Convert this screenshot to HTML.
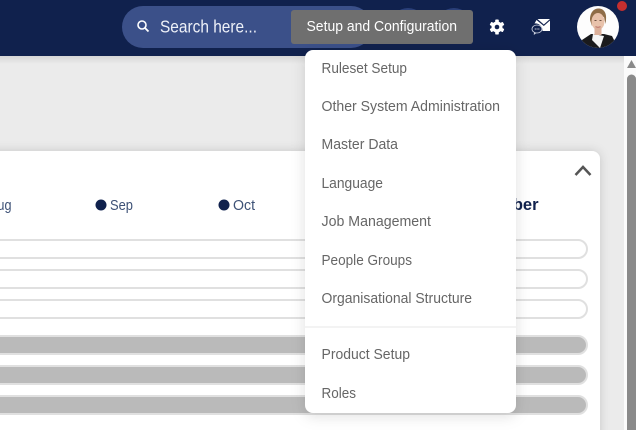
<!DOCTYPE html>
<html><head><meta charset="utf-8"><style>
html,body{margin:0;padding:0;width:636px;height:430px;overflow:hidden;background:#ebebeb}
svg{display:block}
text{font-family:"Liberation Sans",sans-serif}
.m{font-size:14.6px;fill:#666}
</style></head><body>
<svg width="636" height="430" viewBox="0 0 636 430" xmlns="http://www.w3.org/2000/svg">
<defs>
<linearGradient id="top" x1="0" y1="0" x2="0" y2="1"><stop offset="0" stop-color="#d6d6d6"/><stop offset="1" stop-color="#ebebeb"/></linearGradient>
<filter id="cs" x="-10%" y="-10%" width="120%" height="120%"><feDropShadow dx="0" dy="0" stdDeviation="5" flood-color="#000" flood-opacity=".16"/></filter>
<filter id="ds" x="-15%" y="-10%" width="130%" height="120%"><feDropShadow dx="0" dy="3" stdDeviation="7" flood-color="#000" flood-opacity=".13"/></filter>
<clipPath id="av"><circle cx="598" cy="27" r="21"/></clipPath>
</defs>
<rect x="0" y="0" width="636" height="430" fill="#ebebeb"/>
<rect x="0" y="56" width="624" height="8" fill="url(#top)"/>
<!-- scrollbar -->
<rect x="624" y="56" width="12" height="374" fill="#fbfbfb"/>
<path d="M631.500 60 L636 68 L627 68 Z" fill="#8a8a8a"/>
<path d="M627 79 a4.500 4.500 0 0 1 9 0 V430 H627 Z" fill="#8a8a8a"/>
<!-- card -->
<path d="M-20 151 H592 a8 8 0 0 1 8 8 V450 H-20 Z" fill="#fff" filter="url(#cs)"/>
<path d="M575.500 175 L583 167 L590.500 175" fill="none" stroke="#555" stroke-width="2.500"/>
<text x="-11" y="210" font-size="14.600" fill="#3d5176" textLength="22.500" lengthAdjust="spacingAndGlyphs">Aug</text>
<circle cx="101" cy="205" r="5.500" fill="#10214d"/>
<text x="110" y="210" font-size="14.600" fill="#3d5176" textLength="23" lengthAdjust="spacingAndGlyphs">Sep</text>
<circle cx="224" cy="205" r="5.500" fill="#10214d"/>
<text x="233" y="210" font-size="14.600" fill="#3d5176" textLength="22" lengthAdjust="spacingAndGlyphs">Oct</text>
<text x="538.500" y="210" font-size="16.500" font-weight="700" fill="#10214d" text-anchor="end">November</text>
<g fill="#fff" stroke="#e0e0e0" stroke-width="2">
<rect x="-30" y="240" width="617" height="18" rx="9"/>
<rect x="-30" y="270" width="617" height="18" rx="9"/>
<rect x="-30" y="300" width="617" height="18" rx="9"/>
</g>
<g fill="#bababa" stroke="#e0e0e0" stroke-width="2">
<rect x="-30" y="336" width="617" height="18" rx="9"/>
<rect x="-30" y="366" width="617" height="18" rx="9"/>
<rect x="-30" y="396" width="617" height="18" rx="9"/>
</g>
<!-- header -->
<rect x="0" y="0" width="636" height="56" fill="#10214d"/>
<rect x="122" y="6" width="250" height="42" rx="21" fill="#3b5089"/>
<circle cx="142" cy="25" r="4" fill="none" stroke="#fff" stroke-width="1.600"/>
<path d="M145 28 L148.500 31.500" stroke="#fff" stroke-width="1.800"/>
<text x="160" y="32.500" font-size="17.500" fill="#eef1f8" textLength="97" lengthAdjust="spacingAndGlyphs">Search here...</text>
<circle cx="408" cy="26" r="18" fill="#2a3f78"/>
<circle cx="454" cy="26" r="18" fill="#2a3f78"/>
<rect x="291" y="10" width="182" height="34" rx="3" fill="#6f6f6f"/>
<text x="306.500" y="31" font-size="14.800" fill="#fff" textLength="150.500" lengthAdjust="spacingAndGlyphs">Setup and Configuration</text>
<!-- gear -->
<g transform="translate(497 27)">
<g fill="#fff">
<circle r="5.500"/>
<rect x="-1.800" y="-7.500" width="3.600" height="15" rx=".8"/>
<rect x="-1.800" y="-7.500" width="3.600" height="15" rx=".8" transform="rotate(60)"/>
<rect x="-1.800" y="-7.500" width="3.600" height="15" rx=".8" transform="rotate(120)"/>
</g>
<circle r="2.300" fill="#10214d"/>
</g>
<!-- mail -->
<path d="M537.500 19 H550 L543.800 24.500 Z" fill="#fff"/>
<path d="M534.500 23.500 L536.500 20 L543.800 26 L550 20.500 V31 H542.500 A7 7 0 0 0 534.500 23.500 Z" fill="#fff"/>
<ellipse cx="537" cy="29" rx="5" ry="4" fill="#10214d" stroke="#cfd4e2" stroke-width=".8"/>
<path d="M534 32.500 L533.800 35 L536.500 33" fill="#cfd4e2"/>
<path d="M534.800 29h.9M536.600 29h.9M538.400 29h.9" stroke="#fff" stroke-width="1"/>
<!-- avatar -->
<circle cx="598" cy="27" r="21" fill="#fdfdfd"/>
<g clip-path="url(#av)">
<path d="M577 50 L582 40 L591 34 H604 L612 36 L619 50 Z" fill="#1a1a1c"/>
<path d="M593 34 L592 40 L600 48 L604 36 Z" fill="#f5f5f5"/>
<path d="M590 20 C590 11 595 8.500 598.500 8.500 C603 8.500 607 12 606 20 L605.500 24 L604 17 L595 16 L592 26 Z" fill="#8f6d48"/>
<ellipse cx="598" cy="21.500" rx="6.500" ry="8.500" fill="#e8c2ab"/>
<rect x="594.500" y="27" width="7" height="8" fill="#dcb09a"/>
<path d="M595.500 26.500 Q598 28 600.500 26.500" stroke="#b86f66" stroke-width="1" fill="none"/>
<path d="M594.500 20.500h2M599.500 20.500h2" stroke="#6b5040" stroke-width="1"/>
</g>
<circle cx="622" cy="6" r="5" fill="#c62f2f"/>
<!-- dropdown -->
<rect x="305" y="50" width="211" height="363" rx="8" fill="#fff" filter="url(#ds)"/>
<rect x="305" y="326" width="211" height="2" fill="#f3f3f3"/>
<text class="m" x="321.500" y="73" textLength="85.500" lengthAdjust="spacingAndGlyphs">Ruleset Setup</text>
<text class="m" x="321.500" y="111" textLength="178.500" lengthAdjust="spacingAndGlyphs">Other System Administration</text>
<text class="m" x="321.500" y="149" textLength="76.500" lengthAdjust="spacingAndGlyphs">Master Data</text>
<text class="m" x="321.500" y="188" textLength="61.500" lengthAdjust="spacingAndGlyphs">Language</text>
<text class="m" x="321.500" y="226" textLength="109.500" lengthAdjust="spacingAndGlyphs">Job Management</text>
<text class="m" x="321.500" y="265" textLength="90.500" lengthAdjust="spacingAndGlyphs">People Groups</text>
<text class="m" x="321.500" y="303" textLength="150.500" lengthAdjust="spacingAndGlyphs">Organisational Structure</text>
<text class="m" x="321.500" y="359" textLength="88.500" lengthAdjust="spacingAndGlyphs">Product Setup</text>
<text class="m" x="321.500" y="398" textLength="34.500" lengthAdjust="spacingAndGlyphs">Roles</text>
</svg>
</body></html>
